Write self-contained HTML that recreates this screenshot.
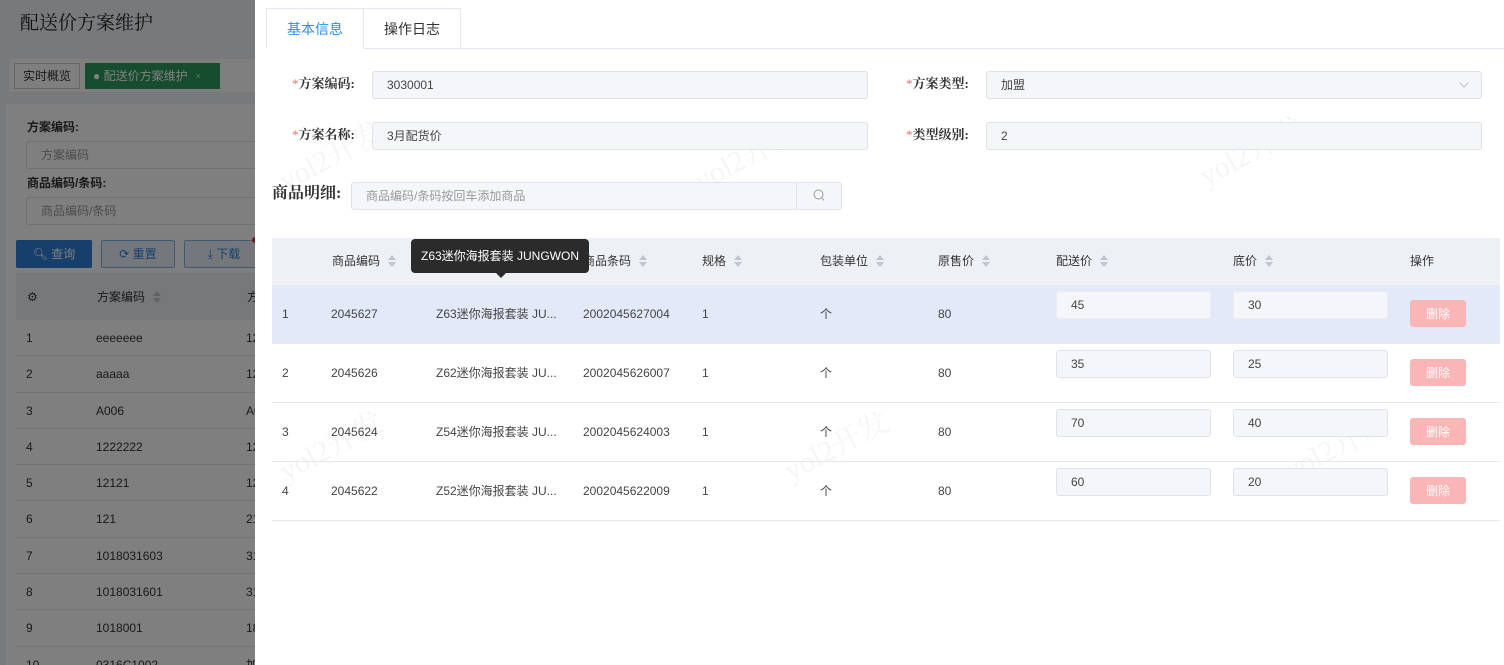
<!DOCTYPE html>
<html style="overflow:hidden"><head><meta charset="utf-8"><style>
*{box-sizing:border-box;margin:0;padding:0}
html,body{width:1504px;height:665px;overflow:hidden}
body{position:relative;font-family:"Liberation Sans","Noto Sans CJK SC",sans-serif;font-size:12px;line-height:14px;color:#333;background:#f0f2f5}
.a{position:absolute}
.inp{position:absolute;background:#f5f6fa;border:1px solid #dfe2e8;border-radius:3px;padding-left:14px;font-size:12px;color:#444;display:flex;align-items:center}
.lbl{position:absolute;font-size:13px;color:#333;font-family:"Liberation Serif","Noto Serif CJK SC",serif;font-weight:bold}
.lbl b{color:#f56c6c;font-weight:normal}
.sort{display:inline-block;vertical-align:middle;margin-left:8px;width:8px;height:12px;position:relative;top:-1px}
.sort:before{content:"";position:absolute;top:0;left:0;border:4px solid transparent;border-bottom:5px solid #c0c4cc;border-top:0}
.sort:after{content:"";position:absolute;bottom:0;left:0;border:4px solid transparent;border-top:5px solid #c0c4cc;border-bottom:0}
.th{position:absolute;top:254px;font-size:12px;color:#333;line-height:14px}
.td{position:absolute;font-size:12px;color:#444;line-height:14px;white-space:nowrap}
.del{position:absolute;left:1410px;width:56px;height:27px;background:#fab6b6;color:#fff;border-radius:3px;font-size:12px;display:flex;align-items:center;justify-content:center}
.wm{position:absolute;color:rgba(0,0,0,0.04);font-family:"Liberation Serif","Noto Serif CJK SC",serif;font-size:30px;transform:rotate(-28deg)}
.lt{position:absolute;color:#333;font-size:12px;line-height:14px;white-space:nowrap}
.row{height:36.3px;border-bottom:1px solid #e8e8e8;position:relative}
</style></head><body>
<div class="a" style="left:0;top:0;width:255px;height:665px;overflow:hidden">
<div class="a" style="left:20px;top:12px;font-size:19px;color:#222;font-family:'Liberation Serif','Noto Serif CJK SC',serif;line-height:24px">配送价方案维护</div>
<div class="a" style="left:9px;top:59px;width:260px;height:33px;background:#fff"></div>
<div class="a" style="left:14px;top:63px;width:66px;height:26px;border:1px solid #ccc;background:#fff;font-size:12px;display:flex;align-items:center;justify-content:center">实时概览</div>
<div class="a" style="left:85px;top:63px;width:135px;height:26px;background:#2e9b5e;color:#fff;font-size:12px;display:flex;align-items:center;padding-left:8px">● 配送价方案维护 <span style="font-size:9px;margin-left:8px;opacity:.7">×</span></div>
<div class="a" style="left:6px;top:104px;width:260px;height:561px;background:#fff"></div>
<div class="lt" style="left:27px;top:120px;font-weight:bold">方案编码:</div>
<div class="inp" style="left:26px;top:141px;width:240px;height:28px;background:#fff;color:#999">方案编码</div>
<div class="lt" style="left:27px;top:176px;font-weight:bold">商品编码/条码:</div>
<div class="inp" style="left:26px;top:197px;width:240px;height:28px;background:#fff;color:#999">商品编码/条码</div>
<div class="a" style="left:16px;top:240px;width:76px;height:28px;background:#2d7fd8;color:#fff;border-radius:2px;display:flex;align-items:center;justify-content:center;font-size:12px">🔍︎ 查询</div>
<div class="a" style="left:101px;top:240px;width:74px;height:28px;border:1px solid #7fb2e8;background:#e8f1fb;color:#2d7fd8;border-radius:2px;display:flex;align-items:center;justify-content:center">⟳ 重置</div>
<div class="a" style="left:184px;top:240px;width:80px;height:28px;border:1px solid #7fb2e8;background:#e8f1fb;color:#2d7fd8;border-radius:2px;display:flex;align-items:center;justify-content:center">⤓ 下载</div>
<div class="a" style="left:16px;top:273px;width:250px;height:47px;background:#edf0f5"></div>
<div class="lt" style="left:27px;top:290px">⚙</div>
<div class="lt" style="left:97px;top:290px">方案编码<span class="sort"></span></div>
<div class="lt" style="left:247px;top:290px">方</div>
<div class="a" style="left:16px;top:320px;width:250px;height:345px;background:#fff"></div>
<div class="a" style="left:16px;top:320px;width:250px">
<div class="row"><span class="lt" style="left:10px;top:11px">1</span><span class="lt" style="left:80px;top:11px">eeeeeee</span><span class="lt" style="left:230px;top:11px">12</span></div>
<div class="row"><span class="lt" style="left:10px;top:11px">2</span><span class="lt" style="left:80px;top:11px">aaaaa</span><span class="lt" style="left:230px;top:11px">12</span></div>
<div class="row"><span class="lt" style="left:10px;top:11px">3</span><span class="lt" style="left:80px;top:11px">A006</span><span class="lt" style="left:230px;top:11px">A0</span></div>
<div class="row"><span class="lt" style="left:10px;top:11px">4</span><span class="lt" style="left:80px;top:11px">1222222</span><span class="lt" style="left:230px;top:11px">12</span></div>
<div class="row"><span class="lt" style="left:10px;top:11px">5</span><span class="lt" style="left:80px;top:11px">12121</span><span class="lt" style="left:230px;top:11px">12</span></div>
<div class="row"><span class="lt" style="left:10px;top:11px">6</span><span class="lt" style="left:80px;top:11px">121</span><span class="lt" style="left:230px;top:11px">21</span></div>
<div class="row"><span class="lt" style="left:10px;top:11px">7</span><span class="lt" style="left:80px;top:11px">1018031603</span><span class="lt" style="left:230px;top:11px">31</span></div>
<div class="row"><span class="lt" style="left:10px;top:11px">8</span><span class="lt" style="left:80px;top:11px">1018031601</span><span class="lt" style="left:230px;top:11px">31</span></div>
<div class="row"><span class="lt" style="left:10px;top:11px">9</span><span class="lt" style="left:80px;top:11px">1018001</span><span class="lt" style="left:230px;top:11px">18</span></div>
<div class="row" style="border:0"><span class="lt" style="left:10px;top:11px">10</span><span class="lt" style="left:80px;top:11px">0316C1002</span><span class="lt" style="left:230px;top:11px">加</span></div>
</div>
<div class="a" style="left:252px;top:237px;width:6px;height:6px;border-radius:50%;background:#e33"></div>
<div class="a" style="left:0;top:0;width:255px;height:665px;background:rgba(0,0,0,0.5)"></div>
</div>

<div class="a" style="left:255px;top:0;width:1249px;height:665px;background:#fff"></div>
<div class="a" style="left:266px;top:48px;width:1238px;height:1px;background:#e4e7ed"></div>
<div class="a" style="left:266px;top:8px;width:98px;height:41px;border:1px solid #e4e7ed;border-bottom:1px solid #fff;background:#fff;color:#2d8cf0;font-size:14px;display:flex;align-items:center;justify-content:center">基本信息</div>
<div class="a" style="left:363px;top:8px;width:98px;height:40px;border:1px solid #e4e7ed;border-bottom:0;font-size:14px;color:#333;display:flex;align-items:center;justify-content:center">操作日志</div>

<div class="wm" style="left:275px;top:150px">yol2开发</div>
<div class="wm" style="left:690px;top:150px">yol2开发</div>
<div class="wm" style="left:1195px;top:145px">yol2开发</div>
<div class="wm" style="left:275px;top:440px">yol2开发</div>
<div class="wm" style="left:780px;top:440px">yol2开发</div>
<div class="wm" style="left:1280px;top:440px">yol2开发</div>

<div class="lbl" style="left:292px;top:77px"><b>*</b>方案编码:</div>
<div class="inp" style="left:372px;top:71px;width:496px;height:28px">3030001</div>
<div class="lbl" style="left:292px;top:128px"><b>*</b>方案名称:</div>
<div class="inp" style="left:372px;top:122px;width:496px;height:28px">3月配货价</div>
<div class="lbl" style="left:906px;top:77px"><b>*</b>方案类型:</div>
<div class="inp" style="left:986px;top:71px;width:496px;height:28px">加盟<svg style="position:absolute;right:12px;top:10px" width="10" height="6"><path d="M0.5 0.5L5 5L9.5 0.5" fill="none" stroke="#c0c4cc"/></svg></div>
<div class="lbl" style="left:906px;top:128px"><b>*</b>类型级别:</div>
<div class="inp" style="left:986px;top:122px;width:496px;height:28px">2</div>

<div class="a" style="left:272px;top:185px;font-size:16px;font-weight:bold;color:#333;line-height:18px;font-family:'Liberation Serif','Noto Serif CJK SC',serif">商品明细:</div>
<div class="inp" style="left:351px;top:182px;width:491px;height:28px;color:#999">商品编码/条码按回车添加商品</div>
<div class="a" style="left:796px;top:183px;width:1px;height:26px;background:#dfe2e8"></div>
<svg class="a" style="left:813px;top:189px" width="12" height="13"><circle cx="5.5" cy="5.5" r="4.5" fill="none" stroke="#999"/><path d="M9 9L11 11.5" stroke="#999"/></svg>

<div class="a" style="left:272px;top:238px;width:1228px;height:47px;background:#edf0f5"></div>
<div class="th" style="left:332px">商品编码<span class="sort"></span></div>
<div class="th" style="left:583px">商品条码<span class="sort"></span></div>
<div class="th" style="left:702px">规格<span class="sort"></span></div>
<div class="th" style="left:820px">包装单位<span class="sort"></span></div>
<div class="th" style="left:938px">原售价<span class="sort"></span></div>
<div class="th" style="left:1056px">配送价<span class="sort"></span></div>
<div class="th" style="left:1233px">底价<span class="sort"></span></div>
<div class="th" style="left:1410px">操作</div>

<div class="a" style="left:272px;top:285px;width:1228px;height:59px;background:#e3e9f9;border-bottom:1px solid #e8e8e8"></div>
<div class="a" style="left:272px;top:344px;width:1228px;height:59px;border-bottom:1px solid #e8e8e8"></div>
<div class="a" style="left:272px;top:403px;width:1228px;height:59px;border-bottom:1px solid #e8e8e8"></div>
<div class="a" style="left:272px;top:462px;width:1228px;height:59px;border-bottom:1px solid #e8e8e8"></div>

<div class="td" style="left:282px;top:307px">1</div><div class="td" style="left:331px;top:307px">2045627</div><div class="td" style="left:436px;top:307px">Z63迷你海报套装 JU...</div><div class="td" style="left:583px;top:307px">2002045627004</div><div class="td" style="left:702px;top:307px">1</div><div class="td" style="left:820px;top:307px">个</div><div class="td" style="left:938px;top:307px">80</div>
<div class="inp" style="left:1056px;top:291px;width:155px;height:28px;border-color:#eceef3">45</div><div class="inp" style="left:1233px;top:291px;width:155px;height:28px;border-color:#eceef3">30</div><div class="del" style="top:300px">删除</div>

<div class="td" style="left:282px;top:366px">2</div><div class="td" style="left:331px;top:366px">2045626</div><div class="td" style="left:436px;top:366px">Z62迷你海报套装 JU...</div><div class="td" style="left:583px;top:366px">2002045626007</div><div class="td" style="left:702px;top:366px">1</div><div class="td" style="left:820px;top:366px">个</div><div class="td" style="left:938px;top:366px">80</div>
<div class="inp" style="left:1056px;top:350px;width:155px;height:28px">35</div><div class="inp" style="left:1233px;top:350px;width:155px;height:28px">25</div><div class="del" style="top:359px">删除</div>

<div class="td" style="left:282px;top:425px">3</div><div class="td" style="left:331px;top:425px">2045624</div><div class="td" style="left:436px;top:425px">Z54迷你海报套装 JU...</div><div class="td" style="left:583px;top:425px">2002045624003</div><div class="td" style="left:702px;top:425px">1</div><div class="td" style="left:820px;top:425px">个</div><div class="td" style="left:938px;top:425px">80</div>
<div class="inp" style="left:1056px;top:409px;width:155px;height:28px">70</div><div class="inp" style="left:1233px;top:409px;width:155px;height:28px">40</div><div class="del" style="top:418px">删除</div>

<div class="td" style="left:282px;top:484px">4</div><div class="td" style="left:331px;top:484px">2045622</div><div class="td" style="left:436px;top:484px">Z52迷你海报套装 JU...</div><div class="td" style="left:583px;top:484px">2002045622009</div><div class="td" style="left:702px;top:484px">1</div><div class="td" style="left:820px;top:484px">个</div><div class="td" style="left:938px;top:484px">80</div>
<div class="inp" style="left:1056px;top:468px;width:155px;height:28px">60</div><div class="inp" style="left:1233px;top:468px;width:155px;height:28px">20</div><div class="del" style="top:477px">删除</div>

<div class="a" style="left:411px;top:239px;width:178px;height:34px;background:#2b2b2b;border-radius:4px;color:#fff;font-size:12px;display:flex;align-items:center;justify-content:center">Z63迷你海报套装 JUNGWON</div>
<div class="a" style="left:496px;top:273px;border:5px solid transparent;border-top:5px solid #2b2b2b;border-bottom:0"></div>
</body></html>
